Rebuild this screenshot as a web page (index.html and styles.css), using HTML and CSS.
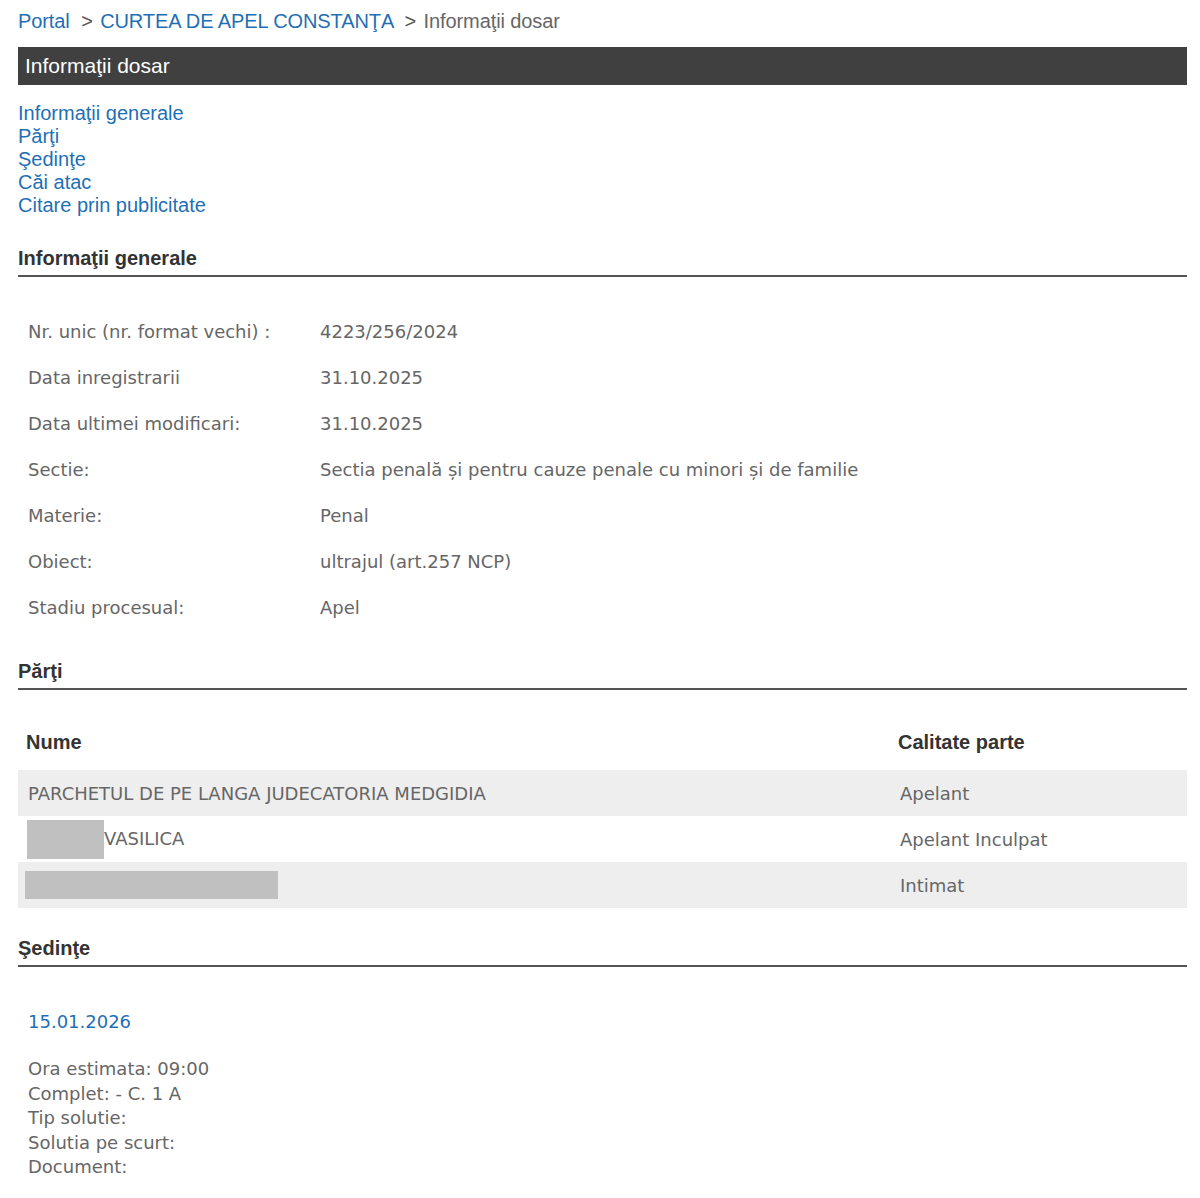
FILE: index.html
```html
<!DOCTYPE html>
<html>
<head>
    <title>Informaţii dosar</title>
    <link rel="stylesheet" href="styles.css">
</head>
<body>

<div id="page">

    <div class="breadcrumb">
        <a href="#">Portal</a>
        <span class="sep">&gt;</span>
        <a href="#">CURTEA DE APEL CONSTANŢA</a>
        <span class="sep">&gt;</span>
        <span class="current">Informaţii dosar</span>
    </div>

    <div class="title__bar">Informaţii dosar</div>

    <ul class="anchors">
        <li><a href="#general">Informaţii generale</a></li>
        <li><a href="#parti">Părţi</a></li>
        <li><a href="#sedinte">Şedinţe</a></li>
        <li><a href="#cai">Căi atac</a></li>
        <li><a href="#citare">Citare prin publicitate</a></li>
    </ul>

    <h2 class="section__title" id="general">Informaţii generale</h2>
    <table class="info__table">
        <tr><td class="info__label">Nr. unic (nr. format vechi) :</td><td>4223/256/2024</td></tr>
        <tr><td class="info__label">Data inregistrarii</td><td>31.10.2025</td></tr>
        <tr><td class="info__label">Data ultimei modificari:</td><td>31.10.2025</td></tr>
        <tr><td class="info__label">Sectie:</td><td>Sectia penală și pentru cauze penale cu minori și de familie</td></tr>
        <tr><td class="info__label">Materie:</td><td>Penal</td></tr>
        <tr><td class="info__label">Obiect:</td><td>ultrajul (art.257 NCP)</td></tr>
        <tr><td class="info__label">Stadiu procesual:</td><td>Apel</td></tr>
    </table>

    <h2 class="section__title" id="parti">Părţi</h2>
    <table class="parti__table">
        <tr class="parti__head"><th class="col__nume">Nume</th><th>Calitate parte</th></tr>
        <tr class="odd"><td class="col__nume">PARCHETUL DE PE LANGA JUDECATORIA MEDGIDIA</td><td>Apelant</td></tr>
        <tr><td class="col__nume"><span class="hidden__name short"></span>VASILICA</td><td>Apelant Inculpat</td></tr>
        <tr class="odd"><td class="col__nume"><span class="hidden__name long"></span></td><td>Intimat</td></tr>
    </table>

    <h2 class="section__title" id="sedinte">Şedinţe</h2>
    <div class="sedinta">
        <div class="sedinta__date">15.01.2026</div>
        <div class="sedinta__info">
            Ora estimata: 09:00<br>
            Complet: - C. 1 A<br>
            Tip solutie:<br>
            Solutia pe scurt:<br>
            Document:
        </div>
    </div>

</div>

</body>
</html>
```

FILE: styles.css
```css
body {
    margin: 0;
    background: #fff;
    font-family: "Liberation Sans", Arial, sans-serif;
    overflow: hidden;
}

#page {
    padding: 8px 13px 0 18px;
}

a {
    color: #1f6fb5;
    text-decoration: none;
}

/*---------Top-------------*/
.breadcrumb {
    font-size: 20px;
    line-height: 26px;
    color: #666;
    letter-spacing: -0.1px;
}
.breadcrumb .sep { margin: 0 2px 0 6px; color: #555; }
.breadcrumb .current { color: #666; }

.title__bar {
    margin-top: 13px;
    height: 38px;
    line-height: 38px;
    background: #404040;
    color: #fff;
    font-size: 21px;
    padding-left: 7px;
}

.anchors {
    list-style-type: none;
    margin: 17px 0 0;
    padding: 0;
    font-size: 20px;
    line-height: 23px;
}

/*---------Sections-------------*/
.section__title {
    margin: 0;
    font-size: 20px;
    font-weight: bold;
    color: #333;
    line-height: 26px;
    padding-bottom: 4px;
    border-bottom: 2px solid #555;
}
#general { margin-top: 28px; }

.info__table,
.parti__table {
    border-collapse: collapse;
    width: 100%;
    font-family: "DejaVu Sans", Verdana, sans-serif;
    font-size: 18px;
    color: #666;
}

.info__table { margin: 31px 0 28px; }
.info__table td {
    height: 46px;
    padding: 0 0 0 10px;
}
.info__table .info__label { width: 282px; }

.parti__table { margin: 28px 0 27px; }
.parti__head th {
    text-align: left;
    font-family: "Liberation Sans", Arial, sans-serif;
    font-size: 20px;
    color: #333;
    height: 48px;
    padding: 0 0 4px 8px;
}
.parti__table td {
    height: 46px;
    padding: 0 0 0 10px;
}
.parti__table .col__nume { width: 862px; }
.parti__table tr.odd td { background: #eeeeee; }

.hidden__name {
    display: inline-block;
    vertical-align: middle;
    background: #c0c0c0;
}
.hidden__name.short { width: 77px; height: 39px; margin-left: -1px; }
.hidden__name.long { width: 253px; height: 28px; margin-left: -3px; }

/*---------Sedinte-------------*/
.sedinta {
    padding: 0 0 0 10px;
    font-family: "DejaVu Sans", Verdana, sans-serif;
    font-size: 18px;
    color: #666;
}
.sedinta__date {
    color: #1f6fb5;
    margin-top: 42px;
    line-height: 26px;
}
.sedinta__info {
    margin-top: 22px;
    line-height: 24.5px;
}
```
